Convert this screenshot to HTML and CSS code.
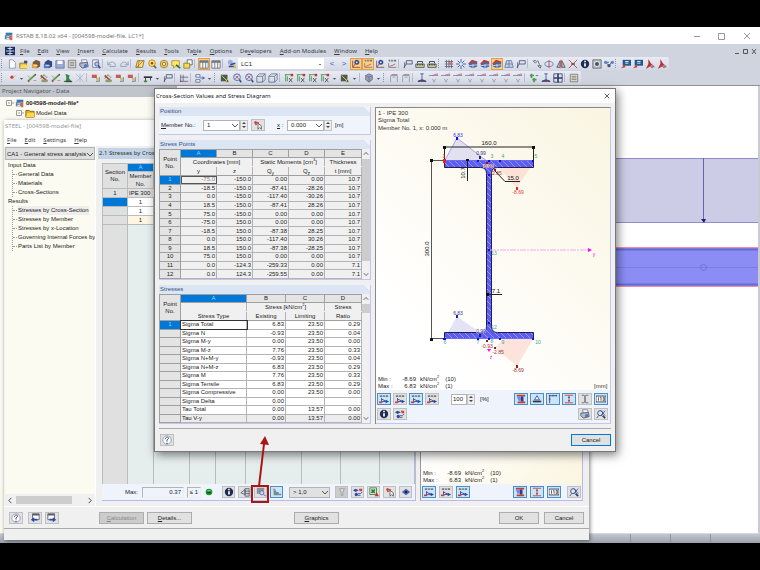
FILE: index.html
```html
<!DOCTYPE html>
<html lang="en">
<head>
    <meta charset="UTF-8">
    <meta name="viewport" content="width=device-width, initial-scale=1.0">
    <title>RSTAB 8.18.02 x64 - [004598-model-file, LC1*]</title>
    <link rel="stylesheet" href="styles.css">
</head>
<body>
    <!-- icon sprite -->
    <svg class="sprite" aria-hidden="true">
        <symbol id="i-app" viewBox="0 0 12 12"><path d="M2 2h8v3H2z" fill="#3b78b5"/><path d="M1 5h6v5H1z" fill="#5a7fa8"/><path d="M7 5h3v6H7z" fill="#d06a4a"/><path d="M3 7h3M3 9h3" stroke="#fff"/></symbol>
        <symbol id="i-doc" viewBox="0 0 12 12"><path d="M0 1h12v10H0z" fill="#1c2f66"/><path d="M1 6h10M3 3h6M3 9h6M6 1v10" stroke="#e8edf8"/></symbol>
        <symbol id="i-new" viewBox="0 0 12 12"><path d="M3 1h4l3 3v7H3z" fill="#fff" stroke="#8791a8"/></symbol>
        <symbol id="i-open" viewBox="0 0 12 12"><path d="M1 5h8v6H1z" fill="#f3c232" stroke="#9c7616"/><path d="M6 2h4v3H6z" fill="#36538c"/><path d="M3 7h9l-2 4H1z" fill="#ffdc69"/></symbol>
        <symbol id="i-folder" viewBox="0 0 12 12"><path d="M1 3h4l1 1h5v7H1z" fill="#e9b21c" stroke="#7a5c10"/><path d="M3 6h8v5H1z" fill="#ffd84e"/></symbol>
        <symbol id="i-block" viewBox="0 0 12 12"><path d="M2 4l4-3 5 2v6l-4 2-5-2z" fill="#7a5a3c"/><path d="M1 6h6v5H1z" fill="#e8993a"/><path d="M3 8h5" stroke="#fff"/></symbol>
        <symbol id="i-blue" viewBox="0 0 12 12"><path d="M2 4l4-3 5 2v6l-4 2-5-2z" fill="#334a84"/><path d="M1 6h6v5H1z" fill="#4d78c4"/><path d="M3 8h5" stroke="#fff"/></symbol>
        <symbol id="i-save" viewBox="0 0 12 12"><path d="M1 2h10v9H1z" fill="#9ba9d6" stroke="#6b77a6"/><path d="M3 2h6v4H3z" fill="#fff"/></symbol>
        <symbol id="i-list" viewBox="0 0 12 12"><path d="M1.500 1.500h9v9h-9z" fill="#e7e4da" stroke="#77736a"/><path d="M3 4h6M3 6h6M3 8h6" stroke="#77736a"/></symbol>
        <symbol id="i-print" viewBox="0 0 12 12"><path d="M3 1h6l1 4H4z" fill="#fff" stroke="#777f96"/><path d="M1 5l9-1 1 5-7 2-3-3z" fill="#b3bad0" stroke="#4d5673"/><circle cx="8" cy="8" r="2" fill="#5575b8"/></symbol>
        <symbol id="i-preview" viewBox="0 0 12 12"><path d="M2 1h7v9H2z" fill="#eef1f8" stroke="#6f7a98"/><circle cx="7" cy="6" r="2.500" fill="#b4c4e6" stroke="#3d548e"/><path d="M9 8l2 3" stroke="#3d548e" stroke-width="2"/></symbol>
        <symbol id="i-undo" viewBox="0 0 12 12"><path d="M1 3v4h4M1 7c3-5 9-4 9 1v1H3" fill="none" stroke="#8a97b5"/></symbol>
        <symbol id="i-redo" viewBox="0 0 12 12"><path d="M11 3v4H7M11 7C8 2 2 3 2 8v1h7" fill="none" stroke="#8a97b5"/></symbol>
        <symbol id="i-plane" viewBox="0 0 12 12"><path d="M3 2h8l-2 8H1z" fill="#f8ea77" stroke="#7b6b2c"/><path d="M2 10L10 2M5 2L4 10" stroke="#c65f20"/></symbol>
        <symbol id="i-lens" viewBox="0 0 12 12"><circle cx="6" cy="5" r="4" fill="#f7e458" stroke="#aa8a25"/><circle cx="6" cy="5" r="1.500" fill="#c22b2b"/><path d="M8 8l3 3" stroke="#666" stroke-width="2"/></symbol>
        <symbol id="i-target" viewBox="0 0 12 12"><circle cx="6" cy="6" r="4.500" fill="#f2e04c" stroke="#8a7728"/><circle cx="6" cy="6" r="2" fill="#fff" stroke="#bb3c2e"/></symbol>
        <symbol id="i-note" viewBox="0 0 12 12"><path d="M1 2h9v6H6l-3 3V8H1z" fill="#fbe768" stroke="#ab9326"/><path d="M6 7l5 4" stroke="#376a36" stroke-width="2"/></symbol>
        <symbol id="i-copy" viewBox="0 0 12 12"><path d="M5 1h6v6H5z" fill="#fff" stroke="#556"/><path d="M1 5h7v6H1z" fill="#f6d954" stroke="#8a7728"/></symbol>
        <symbol id="i-table" viewBox="0 0 12 12"><path d="M1 2h10v9H1z" fill="#f6f6f6" stroke="#6c6f7a"/><path d="M1 3.500h10" stroke="#6c6f7a" stroke-width="2"/><path d="M4.500 4v7M8 4v7" stroke="#6c6f7a"/></symbol>
        <symbol id="i-case" viewBox="0 0 12 12"><circle cx="4" cy="4" r="3" fill="#9ab0dd"/><path d="M2 9h8M4 7l6-2" stroke="#3b4d80" stroke-width="2"/><path d="M8 8h3v3H8z" fill="#e4b93c"/></symbol>
        <symbol id="i-eye" viewBox="0 0 12 12"><circle cx="7" cy="4" r="3" fill="#3b5396"/><circle cx="7" cy="4" r="1" fill="#fff"/><path d="M2 2v8h9M2 10l3-4" fill="none" stroke="#8a4444"/></symbol>
        <symbol id="i-xxx" viewBox="0 0 12 12"><path d="M2 2h2M5 2h2M8 2h3" stroke="#777" stroke-width="2"/><path d="M2 5v5h9M3 9l7-3" stroke="#9b6b6b" fill="none"/></symbol>
        <symbol id="i-ruler" viewBox="0 0 12 12"><path d="M1 6h10v4H1z" fill="#dfe3b1" stroke="#444"/><path d="M3 6v2M5 6v2M7 6v2M9 6v2M3 5V3h6v2" stroke="#333" fill="none"/></symbol>
        <symbol id="i-grid" viewBox="0 0 12 12"><path d="M1 3h10M1 6h10M1 9h10M3 1v10M6 1v10M9 1v10" stroke="#5c6888"/><path d="M5 4h5v3H5z" fill="#c97362"/></symbol>
        <symbol id="i-star" viewBox="0 0 12 12"><path d="M6 0v12M0 6h12M2 2l8 8M10 2l-8 8" stroke="#33539a"/><circle cx="6" cy="6" r="2" fill="#d6e0fa"/></symbol>
        <symbol id="i-house" viewBox="0 0 12 12"><path d="M1 6l4-4 6 2v5l-5 2-5-2z" fill="#4d66a8"/><path d="M1 6l4-4 6 2" fill="none" stroke="#c03a30" stroke-width="2"/><path d="M6 6v5M1 8l10-1" stroke="#d8e0f5"/></symbol>
        <symbol id="i-mesh" viewBox="0 0 12 12"><path d="M3 2h6l2 8H1zM2 6h8M6 2v8" fill="#c7d5ec" stroke="#66769c"/></symbol>
        <symbol id="i-flag" viewBox="0 0 12 12"><path d="M4 2h7v4H4zM1 10l3-4M2 4v7" fill="#dfe5f3" stroke="#47516f"/></symbol>
        <symbol id="i-move" viewBox="0 0 12 12"><path d="M1 2l3 3 3-3 2 5M2 2h3M7 8l3 3 1-3z" stroke="#555b6c" fill="none"/></symbol>
        <symbol id="i-rotate" viewBox="0 0 12 12"><ellipse cx="6" cy="6" rx="5" ry="3" fill="none" stroke="#5b79ba"/><path d="M6 1v10" stroke="#d03b35"/></symbol>
        <symbol id="i-mirror" viewBox="0 0 12 12"><path d="M5 2v8H1zM7 2v8h4z" fill="#b4bccb" stroke="#555"/><path d="M6 1v10" stroke="#d03b35"/></symbol>
        <symbol id="i-cross" viewBox="0 0 12 12"><path d="M1 1l10 10M11 1L1 11" stroke="#c8373e"/><path d="M4 5h4v2H4z" fill="#555"/></symbol>
        <symbol id="i-info" viewBox="0 0 12 12"><circle cx="6" cy="6" r="5" fill="#1d2d52"/><path d="M6 5v4M6 2v2" stroke="#fff" stroke-width="2"/></symbol>
        <symbol id="i-cam" viewBox="0 0 12 12"><path d="M1 1h10v10H1z" fill="#c2c0b2" stroke="#666"/><circle cx="6" cy="6" r="3" fill="#31518f" stroke="#fff"/></symbol>
        <symbol id="i-net" viewBox="0 0 12 12"><path d="M2 4l4 4 4-5M2 4h4" stroke="#405587" fill="none"/><circle cx="2" cy="4" r="2" fill="#6680be"/><circle cx="6" cy="8" r="2" fill="#405587"/><circle cx="10" cy="4" r="2" fill="#6680be"/></symbol>
        <symbol id="i-screen" viewBox="0 0 12 12"><path d="M2 1h10v7H2z" fill="#21588f"/><path d="M5 3h4M5 5h4" stroke="#fff"/><path d="M0 11l5-5v4z" fill="#d6352c"/></symbol>
        <symbol id="i-pdf" viewBox="0 0 12 12"><path d="M4 0l3 5 5 5-6-1-5 3 3-6z" fill="#c82d2d"/><path d="M7 7h3v4H7z" fill="#8c8f99"/></symbol>
        <symbol id="i-node" viewBox="0 0 12 12"><circle cx="6" cy="5" r="2" fill="#d23b32"/><path d="M7 6l3-3" stroke="#e8a33a"/></symbol>
        <symbol id="i-down" viewBox="0 0 6 12"><path d="M1 6h4l-2 2z" fill="#4a5064"/></symbol>
        <symbol id="i-line" viewBox="0 0 12 12"><path d="M1 10L10 2" stroke="#4f9b4a" stroke-width="2"/><path d="M1 3l4 4M8 9h3" stroke="#c9893e"/><circle cx="2" cy="10" r="1" fill="#c33"/><circle cx="10" cy="2" r="1" fill="#c33"/></symbol>
        <symbol id="i-member" viewBox="0 0 12 12"><path d="M2 3l8 7" stroke="#c83d34" stroke-width="2"/><path d="M2 7l4-5 4 4" stroke="#3c8c45" fill="none"/><path d="M3 8h7v3H3z" fill="#8e9a69"/></symbol>
        <symbol id="i-green" viewBox="0 0 12 12"><path d="M3 1l5 2-1 3 4 5H3l1-5z" fill="#38884b"/><path d="M1 10h10" stroke="#333"/></symbol>
        <symbol id="i-faint" viewBox="0 0 12 12"><path d="M1 1l10 10M11 1L1 11M6 1v10" stroke="#b0b6c4"/></symbol>
        <symbol id="i-load" viewBox="0 0 12 12"><path d="M1 2h6v4H1z" fill="#d5584e"/><path d="M4 4l6 5M10 5v5H6" stroke="#4d7da5" fill="none"/><circle cx="8" cy="8" r="2" fill="#e3be45"/></symbol>
        <symbol id="i-beam" viewBox="0 0 12 12"><path d="M1 4h10v2H1z" fill="#333"/><path d="M3 6v5M9 6v3" stroke="#333"/><path d="M1 10h4" stroke="#46894b" stroke-width="2"/></symbol>
        <symbol id="i-support" viewBox="0 0 12 12"><path d="M2 2v8h9M2 5h9M5 2v8" stroke="#63687a" fill="none"/><circle cx="2" cy="10" r="1" fill="#c33"/></symbol>
        <symbol id="i-plus" viewBox="0 0 12 12"><path d="M1 3h5M3 1v5M6 6v5M4 8h5" stroke="#4d9a52" stroke-width="2"/><path d="M8 3h3" stroke="#666"/></symbol>
        <symbol id="i-arrow" viewBox="0 0 12 12"><path d="M1 2h5v3H1zM1 8h5v3H1zM6 6h5" stroke="#53699c" fill="#fff"/><path d="M9 4l3 2-3 2z" fill="#53699c"/></symbol>
        <symbol id="i-zoom" viewBox="0 0 12 12"><circle cx="6" cy="5" r="4" fill="#dce7fb" stroke="#3c5797"/><path d="M4 3l4 4M8 3L4 7" stroke="#b93a3a"/><path d="M9 8l2 3" stroke="#3c5797" stroke-width="2"/></symbol>
        <symbol id="i-cube" viewBox="0 0 12 12"><path d="M1 4h7v7H1zM1 4l3-3h7v7l-3 3M8 4l3-3" fill="none" stroke="#66718f"/></symbol>
        <symbol id="i-axis" viewBox="0 0 12 12"><path d="M1 2h10M2 2v8M4 4v6" stroke="#3b9140"/><path d="M6 6l4 5M10 6l-4 5" stroke="#444"/><path d="M8 1h3v3H8z" fill="#c33"/></symbol>
        <symbol id="i-dark" viewBox="0 0 12 12"><path d="M1 2h8v8H1z" fill="#4f5c49"/><path d="M2 3l6 6M9 7l2 4H7z" stroke="#e4df8c" fill="#334"/></symbol>
        <symbol id="i-solid" viewBox="0 0 12 12"><path d="M2 3l4-2 4 2v5l-4 3-4-3z" fill="#98a1b5" stroke="#69728a"/><path d="M2 3l4 2 4-2M6 5v6" stroke="#69728a" fill="none"/></symbol>
        <symbol id="i-frame" viewBox="0 0 12 12"><path d="M2 11V3h8v8M4 5h4" stroke="#8f98a9" fill="none"/><path d="M3 2h7" stroke="#a96060"/></symbol>
        <symbol id="i-res" viewBox="0 0 12 12"><path d="M0 3h11" stroke="#7b84b8"/><path d="M4 3l6-2v2" fill="none" stroke="#c26a6a"/><path d="M4 7l2 4 2-4" stroke="#969cae" fill="none"/></symbol>
        <symbol id="i-base" viewBox="0 0 12 12"><path d="M4 1h4M6 1v7" stroke="#3d4f9a"/><path d="M1 10l5-2 5 2z" fill="#c23a3a" stroke="#28346e"/></symbol>
        <symbol id="i-four" viewBox="0 0 12 12"><path d="M1 1h10v10H1z" fill="#dfe4fa" stroke="#343c66"/><path d="M6 1v10M1 6h10" stroke="#343c66" stroke-width="2"/></symbol>
        <symbol id="i-help" viewBox="0 0 12 12"><circle cx="6" cy="6" r="5" fill="#fff" stroke="#8992a8"/><path d="M4 5c0-3 4-3 4-1L6 6v2M5 10h2" stroke="#273b78" fill="none"/></symbol>
        <symbol id="i-prev" viewBox="0 0 12 12"><path d="M3 1h8v7H3z" fill="#fff" stroke="#555c70"/><path d="M3 2h8" stroke="#555c70" stroke-width="2"/><path d="M1 8l4-3v2h4v2H5v2z" fill="#274aa5"/></symbol>
        <symbol id="i-next" viewBox="0 0 12 12"><path d="M1 1h8v7H1z" fill="#fff" stroke="#555c70"/><path d="M1 2h8" stroke="#555c70" stroke-width="2"/><path d="M11 8L7 5v2H3v2h4v2z" fill="#274aa5"/></symbol>
        <symbol id="i-sig" viewBox="0 0 12 12"><path d="M1 2.500h3M5 2.500h2M8 2.500h3" stroke="#777" stroke-width="2"/><path d="M3 5v4h6M3 6l6 3" stroke="#28439b" fill="none"/><path d="M0 9h4v2H0z" fill="#d23838"/><path d="M8 7l4 2-4 2z" fill="#28439b"/></symbol>
        <symbol id="i-sect" viewBox="0 0 12 12"><path d="M1 1h10v2H1zM2 9h9v2H2z" fill="#c63a37"/><path d="M6 3h3v6H6z" fill="#333e73"/><path d="M1 3h5v5H3z" fill="#6d8be0"/></symbol>
        <symbol id="i-ibeam" viewBox="0 0 12 12"><path d="M1 1.500h10M1 10.500h10M6 2v8" stroke="#c63a37"/><path d="M5 4h2M5 8h2" stroke="#333"/></symbol>
        <symbol id="i-iplain" viewBox="0 0 12 12"><path d="M2 1.500h3l1 2v5l-1 2H2M10 1.500H7l-1 2v5l1 2h3" stroke="#5b6078" fill="none"/></symbol>
        <symbol id="i-dim" viewBox="0 0 12 12"><path d="M1 2h10M2 1v10M1 6h2M6 1v2M10 1v2" stroke="#2e3d70"/></symbol>
        <symbol id="i-tri" viewBox="0 0 12 12"><path d="M6 2l3 5H3z" fill="#fff" stroke="#2f47a5"/><path d="M1 9h10" stroke="#333" stroke-width="2"/></symbol>
        <symbol id="i-num" viewBox="0 0 12 12"><path d="M0 2.500h12v7H0z" fill="#fff" stroke="#333"/><path d="M3 4v4M5 4h1v4M8 4h2v4H8M8 6h2" stroke="#444" fill="none"/></symbol>
        <symbol id="i-find" viewBox="0 0 12 12"><circle cx="5" cy="5" r="3" fill="#dce6f6" stroke="#303e63"/><path d="M3 8l-2 3M6 2l5 6M11 2L6 8" stroke="#314c9d"/><path d="M8 8l3 3" stroke="#303e63" stroke-width="2"/></symbol>
        <symbol id="i-result" viewBox="0 0 12 12"><path d="M0 4l3-2 4 2-4 2z" fill="#304c9d"/><circle cx="4" cy="9" r="2" fill="#304c9d"/><path d="M7 2h4v3H8z" fill="#c94545"/><path d="M6 8h3l2-2M6 10h3" stroke="#304c9d" fill="none"/></symbol>
        <symbol id="i-pick" viewBox="0 0 12 12"><path d="M2 2l5 2M2 2l2 4" stroke="#d14040" stroke-width="2"/><path d="M6 4v7l2-2 2 2V7z" fill="#fff" stroke="#555"/></symbol>
        <symbol id="i-hatch" viewBox="0 0 12 12"><path d="M6 2h5v9H6zM1 7l5-4v6zM6 5h5M6 8h5" fill="#d3d7e0" stroke="#555d70"/></symbol>
        <symbol id="i-sview" viewBox="0 0 12 12"><path d="M1 1h9v3L5 8H1z" fill="#8d909d"/><circle cx="7" cy="7" r="2.500" fill="#cbd8f5" stroke="#51669f"/><path d="M9 9l3 2" stroke="#51669f"/></symbol>
        <symbol id="i-bars" viewBox="0 0 12 12"><path d="M1 2h3v2H1z" fill="#d58a62"/><path d="M2 4h3v2h3v2h3v2H2z" fill="#6c8f96"/></symbol>
        <symbol id="i-filter" viewBox="0 0 12 12"><path d="M3 2h6L7 6v4H5V6z" fill="#ddd" stroke="#999"/></symbol>
        <symbol id="i-xls" viewBox="0 0 12 12"><path d="M1 1h8v8H1z" fill="#d7ecd4" stroke="#3c7a43"/><path d="M3 3l4 4M7 3L3 7" stroke="#2b7a36" stroke-width="2"/><path d="M7 11l2-5 3 5z" fill="#c9332e"/></symbol>
        <symbol id="i-view" viewBox="0 0 12 12"><path d="M1 6l5-4 5 4-5 4z" fill="#4a66b5"/><circle cx="6" cy="6" r="1.500" fill="#15204a"/></symbol>
        <symbol id="i-chev" viewBox="0 0 8 8"><path d="M1 3l3 3 3-3" fill="none" stroke="#555"/></symbol>
    </svg>

    <div class="app">
        <header class="titlebar">
            <svg class="icon"><use href="#i-app"/></svg>
            <h1>RSTAB 8.18.02 x64 - [004598-model-file, LC1*]</h1>
            <svg class="winctl" viewBox="0 0 60 12"><path d="M3 6.500h6M27.500 3.500h6v6h-6zM53 3l6 6M59 3l-6 6" fill="none" stroke="#999"/></svg>
        </header>

        <div class="ribbon">
            <nav class="menubar">
                <svg class="icon"><use href="#i-doc"/></svg>
                <a href="#"><u>F</u>ile</a>
                <a href="#"><u>E</u>dit</a>
                <a href="#"><u>V</u>iew</a>
                <a href="#"><u>I</u>nsert</a>
                <a href="#"><u>C</u>alculate</a>
                <a href="#"><u>R</u>esults</a>
                <a href="#"><u>T</u>ools</a>
                <a href="#">Ta<u>b</u>le</a>
                <a href="#"><u>O</u>ptions</a>
                <a href="#">De<u>v</u>elopers</a>
                <a href="#"><u>A</u>dd-on Modules</a>
                <a href="#"><u>W</u>indow</a>
                <a href="#"><u>H</u>elp</a>
                <svg class="docctl" viewBox="0 0 24 8"><path d="M1 6.500h4M9.500 2.500h4v4h-4zM18 2l4 5M22 2l-4 5" fill="none" stroke="#555"/></svg>
            </nav>
            <div class="toolbar">
                <i class="grip"></i>
                <button><svg><use href="#i-new"/></svg></button><button><svg><use href="#i-open"/></svg></button><button><svg><use href="#i-block"/></svg></button><button><svg><use href="#i-blue"/></svg></button><button><svg><use href="#i-save"/></svg></button><button><svg><use href="#i-list"/></svg></button><button><svg><use href="#i-print"/></svg></button><button><svg><use href="#i-preview"/></svg></button>
                <i class="sep"></i>
                <button><svg><use href="#i-undo"/></svg></button><button><svg><use href="#i-redo"/></svg></button>
                <i class="sep"></i>
                <button><svg><use href="#i-plane"/></svg></button><button><svg><use href="#i-lens"/></svg></button><button><svg><use href="#i-target"/></svg></button><button><svg><use href="#i-note"/></svg></button><button><svg><use href="#i-copy"/></svg></button>
                <i class="sep"></i>
                <button class="on"><svg><use href="#i-table"/></svg></button><button><svg><use href="#i-table"/></svg></button>
                <i class="sep"></i>
                <button><svg><use href="#i-case"/></svg></button>
                <span class="combo case-combo"><select aria-label="Load case"><option>LC1</option></select><svg class="chev"><use href="#i-down"/></svg></span>
                <button class="step">&lt;</button><button class="step">&gt;</button>
                <button class="on"><svg><use href="#i-eye"/></svg></button><button class="on"><svg><use href="#i-xxx"/></svg></button><button><svg><use href="#i-eye"/></svg></button><button><svg><use href="#i-xxx"/></svg></button>
                <i class="sep"></i>
                <button><svg><use href="#i-flag"/></svg></button><button><svg><use href="#i-ruler"/></svg></button><button><svg><use href="#i-ruler"/></svg></button>
                <i class="grip"></i>
                <button><svg><use href="#i-grid"/></svg></button><button><svg><use href="#i-star"/></svg></button><button><svg><use href="#i-house"/></svg></button><button><svg><use href="#i-house"/></svg></button><button class="on"><svg><use href="#i-house"/></svg></button><button><svg><use href="#i-mesh"/></svg></button><button><svg><use href="#i-flag"/></svg></button>
                <i class="sep"></i>
                <button><svg><use href="#i-move"/></svg></button><button><svg><use href="#i-rotate"/></svg></button><button><svg><use href="#i-mirror"/></svg></button><button><svg><use href="#i-cross"/></svg></button><button><svg><use href="#i-info"/></svg></button><button><svg><use href="#i-cam"/></svg></button><button><svg><use href="#i-net"/></svg></button>
                <i class="grip"></i>
                <button><svg><use href="#i-screen"/></svg></button><button><svg><use href="#i-screen"/></svg></button><button><svg><use href="#i-pdf"/></svg></button><button><svg><use href="#i-pdf"/></svg></button>
            </div>
            <div class="toolbar">
                <i class="grip"></i>
                <button><svg><use href="#i-node"/></svg></button><button class="drop"><svg><use href="#i-down"/></svg></button>
                <button><svg><use href="#i-line"/></svg></button><button><svg><use href="#i-member"/></svg></button><button><svg><use href="#i-line"/></svg></button><button><svg><use href="#i-green"/></svg></button><button><svg><use href="#i-faint"/></svg></button>
                <i class="sep"></i>
                <button><svg><use href="#i-load"/></svg></button><button><svg><use href="#i-member"/></svg></button><button><svg><use href="#i-load"/></svg></button><button><svg><use href="#i-load"/></svg></button>
                <i class="sep"></i>
                <button><svg><use href="#i-beam"/></svg></button><button class="drop"><svg><use href="#i-down"/></svg></button><button><svg><use href="#i-flag"/></svg></button>
                <i class="sep"></i>
                <button><svg><use href="#i-support"/></svg></button>
                <i class="sep"></i>
                <button><svg><use href="#i-arrow"/></svg></button><button class="drop"><svg><use href="#i-down"/></svg></button>
                <i class="grip"></i>
                <button><svg><use href="#i-dark"/></svg></button><button><svg><use href="#i-zoom"/></svg></button><button><svg><use href="#i-zoom"/></svg></button><button><svg><use href="#i-cube"/></svg></button><button><svg><use href="#i-cube"/></svg></button>
                <i class="sep"></i>
                <button><svg><use href="#i-axis"/></svg></button><button><svg><use href="#i-axis"/></svg></button><button><svg><use href="#i-axis"/></svg></button><button><svg><use href="#i-axis"/></svg></button><button class="drop"><svg><use href="#i-down"/></svg></button><button><svg><use href="#i-dark"/></svg></button><button class="drop"><svg><use href="#i-down"/></svg></button>
                <i class="sep"></i>
                <button><svg><use href="#i-solid"/></svg></button><button class="drop"><svg><use href="#i-down"/></svg></button>
                <i class="grip"></i>
                <button><svg><use href="#i-frame"/></svg></button><button><svg><use href="#i-frame"/></svg></button>
                <i class="sep"></i>
                <button><svg><use href="#i-base"/></svg></button><button><svg><use href="#i-res"/></svg></button><button><svg><use href="#i-res"/></svg></button><button><svg><use href="#i-res"/></svg></button><button><svg><use href="#i-res"/></svg></button><button><svg><use href="#i-res"/></svg></button><button><svg><use href="#i-res"/></svg></button><button><svg><use href="#i-res"/></svg></button><button><svg><use href="#i-res"/></svg></button>
                <i class="sep"></i>
                <button><svg><use href="#i-plus"/></svg></button><button><svg><use href="#i-base"/></svg></button><button><svg><use href="#i-four"/></svg></button>
                <i class="sep"></i>
                <button><svg><use href="#i-list"/></svg></button>
            </div>
        </div>

        <div class="workspace">
            <aside class="navigator">
                <h2>Project Navigator - Data</h2>
                <div class="project">
                    <p><svg class="twig" viewBox="0 0 8 10"><path d="M.500 2.500h5v5h-5zM2 5h2M6 5h2" fill="none" stroke="#999"/></svg><svg class="icon"><use href="#i-app"/></svg><b>004598-model-file*</b></p>
                    <p class="sub"><svg class="twig" viewBox="0 0 8 10"><path d="M.500 2.500h5v5h-5zM2 5h2M6 5h2" fill="none" stroke="#999"/></svg><svg class="icon"><use href="#i-folder"/></svg>Model Data</p>
                </div>
            </aside>
            <main class="canvas">
                <svg width="100%" height="100%">
                    <rect x="100" y="72" width="100%" height="65" fill="#cccce6"/>
                    <path d="M100 72.500h2000M100 136.500h2000" stroke="#8e8ecb"/>
                    <path d="M526.500 72v61" stroke="#6464b4"/>
                    <path d="M524 133h5l-2 4z" fill="#1c1c82"/>
                    <rect x="100" y="162" width="100%" height="39" fill="#8c8cf5"/>
                    <path d="M100 163.500h2000M100 198.500h2000" stroke="#6969d2" stroke-width="2"/>
                    <path d="M100 181.500h2000" stroke="#7c7ce6"/>
                    <path d="M100 161.500h2000M100 200.500h2000" stroke="#f08ca0"/>
                    <circle cx="526.500" cy="181.500" r="3" fill="none" stroke="#7272dc"/>
                </svg>
            </main>
        </div>
        <footer class="statusbar"><i></i><i></i><i></i></footer>

        <!-- STEEL add-on module window -->
        <section class="window steel">
            <h2 class="caption">STEEL - [004598-model-file]</h2>
            <nav class="menubar">
                <a href="#"><u>F</u>ile</a>
                <a href="#"><u>E</u>dit</a>
                <a href="#"><u>S</u>ettings</a>
                <a href="#"><u>H</u>elp</a>
            </nav>
            <div class="steel-body">
                <div class="side">
                    <span class="combo side-combo"><select aria-label="Case"><option>CA1 - General stress analysis</option></select><svg class="chev"><use href="#i-chev"/></svg></span>
                    <div class="tree">
                        <p>Input Data</p>
                        <ul>
                            <li>General Data</li>
                            <li>Materials</li>
                            <li>Cross-Sections</li>
                        </ul>
                        <p>Results</p>
                        <ul>
                            <li><span class="current">Stresses by Cross-Section</span></li>
                            <li>Stresses by Member</li>
                            <li>Stresses by x-Location</li>
                            <li>Governing Internal Forces by</li>
                            <li>Parts List by Member</li>
                        </ul>
                    </div>
                    <div class="hscroll"><svg viewBox="0 0 8 8"><path d="M5 1L2 4l3 3" fill="none" stroke="#333"/></svg><i></i><svg viewBox="0 0 8 8"><path d="M3 1l3 3-3 3" fill="none" stroke="#333"/></svg></div>
                </div>
                <div class="results">
                    <h3>2.1 Stresses by Cross-Section</h3>
                    <div class="result-panes">
                        <div class="result-list">
                            <table class="result-table">
                                <colgroup><col class="c25"><col class="c26"><col class="c36"><col class="c26"><col class="c30"><col class="c56"><col class="c39"><col class="c39"><col></colgroup>
                                <thead>
                                    <tr class="letters"><th rowspan="2">Section<br>No.</th><th class="sel">A</th><th></th><th></th><th></th><th></th><th></th><th></th><th></th></tr>
                                    <tr class="names"><th>Member<br>No.</th><th></th><th></th><th></th><th></th><th></th><th></th><th></th></tr>
                                </thead>
                                <tbody>
                                    <tr class="section"><th>1</th><td colspan="8">IPE 300</td></tr>
                                    <tr><th class="sel"></th><td class="cell">1</td><td></td><td></td><td></td><td></td><td></td><td></td><td></td></tr>
                                    <tr><th></th><td class="cell">1</td><td></td><td></td><td></td><td></td><td></td><td></td><td></td></tr>
                                    <tr><th></th><td class="cell cream">1</td><td></td><td></td><td></td><td></td><td></td><td></td><td></td></tr>
                                    <tr class="rest"><th></th><td></td><td></td><td></td><td></td><td></td><td></td><td></td><td></td></tr>
                                </tbody>
                            </table>
                            <div class="listbar">
                                <label for="max">Max:</label>
                                <input id="max" class="max" value="0.37">
                                <input class="limit" aria-label="Limit" value="≤ 1">
                                <svg class="smile" viewBox="0 0 12 12"><circle cx="6" cy="6" r="5" fill="#1f9a35"/><path d="M3 7h6" stroke="#0c4a16" stroke-width="2"/><path d="M4 4h4" stroke="#bff0c0"/></svg>
                                <button class="ib"><svg><use href="#i-info"/></svg></button>
                                <button class="ib"><svg><use href="#i-hatch"/></svg></button>
                                <button class="ib"><svg><use href="#i-sview"/></svg></button>
                                <button class="ib act"><svg><use href="#i-bars"/></svg></button>
                                <span class="combo limit-combo"><select aria-label="Ratio filter"><option>&gt; 1,0</option></select><svg class="chev"><use href="#i-chev"/></svg></span>
                                <button class="ib" disabled><svg><use href="#i-filter"/></svg></button>
                                <button class="ib"><svg><use href="#i-result"/></svg></button>
                                <button class="ib"><svg><use href="#i-xls"/></svg></button>
                                <button class="ib"><svg><use href="#i-pick"/></svg></button>
                                <button class="ib"><svg><use href="#i-view"/></svg></button>
                            </div>
                        </div>
                        <div class="preview">
                            <div class="preview-area">
                                <dl class="minmax"><dt>Min :</dt><dd>-8.69</dd><dd>kN/cm<sup>2</sup></dd><dd>(10)</dd><dt>Max :</dt><dd>6.83</dd><dd>kN/cm<sup>2</sup></dd><dd>(1)</dd></dl>
                            </div>
                            <div class="previewbar">
                                <button class="ib act"><svg><use href="#i-sig"/></svg></button>
                                <button class="ib"><svg><use href="#i-sig"/></svg></button>
                                <button class="ib act push"><svg><use href="#i-sig"/></svg></button>
                                <button class="ib act"><svg><use href="#i-sect"/></svg></button>
                                <button class="ib act"><svg><use href="#i-ibeam"/></svg></button>
                                <button class="ib act"><svg><use href="#i-num"/></svg></button>
                                <button class="ib gap"><svg><use href="#i-find"/></svg></button>
                            </div>
                        </div>
                    </div>
                </div>
            </div>
            <div class="actions">
                <button class="ib help"><svg><use href="#i-help"/></svg></button>
                <button class="ib"><svg><use href="#i-prev"/></svg></button>
                <button class="ib"><svg><use href="#i-next"/></svg></button>
                <button class="btn calc" disabled><u>C</u>alculation</button>
                <button class="btn"><u>D</u>etails...</button>
                <button class="btn graphics"><u>G</u>raphics</button>
                <button class="btn ok">OK</button>
                <button class="btn cancel">Cancel</button>
            </div>
        </section>

        <!-- cross-section dialog -->
        <section class="window dialog" role="dialog" aria-labelledby="dlg-title">
            <header class="dialog-title">
                <h2 id="dlg-title">Cross-Section Values and Stress Diagram</h2>
                <button class="close" aria-label="Close"><svg viewBox="0 0 8 8"><path d="M1 1l6 6M7 1L1 7" stroke="#333"/></svg></button>
            </header>
            <div class="dialog-body">
                <div class="groups">
                    <section class="group">
                        <h3>Position</h3>
                        <div class="position">
                            <label for="member"><u>M</u>ember No.:</label>
                            <span class="combo pos-combo"><select id="member"><option>1</option></select><svg class="chev"><use href="#i-chev"/></svg></span>
                            <span class="spin"></span>
                            <button class="ib"><svg><use href="#i-pick"/></svg></button>
                            <label for="loc" class="loc"><u>x</u> :</label>
                            <span class="combo pos-combo"><select id="loc"><option>0.000</option></select><svg class="chev"><use href="#i-chev"/></svg></span>
                            <span class="spin"></span>
                            <span class="unit">[m]</span>
                        </div>
                    </section>

                    <section class="group">
                        <h3>Stress Points</h3>
                        <div class="scroller">
                            <table class="grid points">
                                <colgroup><col class="c21"><col class="c36"><col class="c36"><col class="c36"><col class="c36"><col></colgroup>
                                <thead>
                                    <tr class="letters"><th rowspan="3">Point<br>No.</th><th class="sel">A</th><th>B</th><th>C</th><th>D</th><th>E</th></tr>
                                    <tr class="names top"><th colspan="2">Coordinates [mm]</th><th colspan="2">Static Moments [cm<sup>3</sup>]</th><th>Thickness</th></tr>
                                    <tr class="names"><th>y</th><th>z</th><th>Q<sub>y</sub></th><th>Q<sub>z</sub></th><th>t [mm]</th></tr>
                                </thead>
                                <tbody>
                                    <tr><th class="sel">1</th><td class="focus">-75.0</td><td>-150.0</td><td>0.00</td><td>0.00</td><td>10.7</td></tr>
                                    <tr><th>2</th><td>-18.5</td><td>-150.0</td><td>-87.41</td><td>-28.26</td><td>10.7</td></tr>
                                    <tr><th>3</th><td>0.0</td><td>-150.0</td><td>-117.40</td><td>-30.26</td><td>10.7</td></tr>
                                    <tr><th>4</th><td>18.5</td><td>-150.0</td><td>-87.41</td><td>28.26</td><td>10.7</td></tr>
                                    <tr><th>5</th><td>75.0</td><td>-150.0</td><td>0.00</td><td>0.00</td><td>10.7</td></tr>
                                    <tr><th>6</th><td>-75.0</td><td>150.0</td><td>0.00</td><td>0.00</td><td>10.7</td></tr>
                                    <tr><th>7</th><td>-18.5</td><td>150.0</td><td>-87.38</td><td>28.25</td><td>10.7</td></tr>
                                    <tr><th>8</th><td>0.0</td><td>150.0</td><td>-117.40</td><td>30.26</td><td>10.7</td></tr>
                                    <tr><th>9</th><td>18.5</td><td>150.0</td><td>-87.38</td><td>-28.25</td><td>10.7</td></tr>
                                    <tr><th>10</th><td>75.0</td><td>150.0</td><td>0.00</td><td>0.00</td><td>10.7</td></tr>
                                    <tr><th>11</th><td>0.0</td><td>-124.3</td><td>-259.33</td><td>0.00</td><td>7.1</td></tr>
                                    <tr><th>12</th><td>0.0</td><td>124.3</td><td>-259.55</td><td>0.00</td><td>7.1</td></tr>
                                </tbody>
                            </table>
                            <div class="vscroll"><svg viewBox="0 0 8 8"><path d="M1 5l3-3 3 3" fill="none" stroke="#333"/></svg><i class="long"></i><svg viewBox="0 0 8 8"><path d="M1 3l3 3 3-3" fill="none" stroke="#333"/></svg></div>
                        </div>
                    </section>

                    <section class="group">
                        <h3>Stresses</h3>
                        <div class="scroller">
                            <table class="grid stresses">
                                <colgroup><col class="c21"><col class="c66"><col class="c39"><col class="c39"><col></colgroup>
                                <thead>
                                    <tr class="letters"><th rowspan="3">Point<br>No.</th><th class="sel">A</th><th>B</th><th>C</th><th>D</th></tr>
                                    <tr class="names top"><th></th><th colspan="2">Stress [kN/cm<sup>2</sup>]</th><th>Stress</th></tr>
                                    <tr class="names"><th>Stress Type</th><th>Existing</th><th>Limiting</th><th>Ratio</th></tr>
                                </thead>
                                <tbody>
                                    <tr><th class="sel">1</th><td class="focus">Sigma Total</td><td>6.83</td><td>23.50</td><td>0.29</td></tr>
                                    <tr><th></th><td>Sigma N</td><td>-0.93</td><td>23.50</td><td>0.04</td></tr>
                                    <tr><th></th><td>Sigma M-y</td><td>0.00</td><td>23.50</td><td>0.00</td></tr>
                                    <tr><th></th><td>Sigma M-z</td><td>7.76</td><td>23.50</td><td>0.33</td></tr>
                                    <tr><th></th><td>Sigma N+M-y</td><td>-0.93</td><td>23.50</td><td>0.04</td></tr>
                                    <tr><th></th><td>Sigma N+M-z</td><td>6.83</td><td>23.50</td><td>0.29</td></tr>
                                    <tr><th></th><td>Sigma M</td><td>7.76</td><td>23.50</td><td>0.33</td></tr>
                                    <tr><th></th><td>Sigma Tensile</td><td>6.83</td><td>23.50</td><td>0.29</td></tr>
                                    <tr><th></th><td>Sigma Compressive</td><td>0.00</td><td>23.50</td><td>0.00</td></tr>
                                    <tr><th></th><td>Sigma Delta</td><td>0.00</td><td></td><td></td></tr>
                                    <tr><th></th><td>Tau Total</td><td>0.00</td><td>13.57</td><td>0.00</td></tr>
                                    <tr class="dim"><th></th><td>Tau V-y</td><td>0.00</td><td>13.57</td><td>0.00</td></tr>
                                </tbody>
                            </table>
                            <div class="vscroll"><svg viewBox="0 0 8 8"><path d="M1 5l3-3 3 3" fill="none" stroke="#333"/></svg><i class="short"></i><svg viewBox="0 0 8 8"><path d="M1 3l3 3 3-3" fill="none" stroke="#333"/></svg></div>
                        </div>
                    </section>
                </div>

                <div class="diagram">
                    <svg class="drawing" viewBox="376 108 234 282">
                        <defs>
                            <pattern id="hatch" width="6" height="6" patternUnits="userSpaceOnUse"><path d="M0 0h6v6H0z" fill="#5c5cf2"/><path d="M-1-1l8 8M5-1l2 2M-1 5l2 2" stroke="#9696f8"/></pattern>
                        </defs>
                        <g class="note">
                            <text x="378" y="115">1 - IPE 300</text>
                            <text x="378" y="122">Sigma Total</text>
                            <text x="378" y="130">Member No. 1, x: 0.000 m</text>
                            <text x="594" y="388">[mm]</text>
                        </g>
                        <!-- stress areas -->
                        <path d="M444.500 161l12.500-23 31 24M448 332l9-15.500 23 16z" fill="#c8c8f0" fill-opacity=".5"/>
                        <path d="M444.500 161l12.500-23 31 24" fill="none" stroke="#a4a4ee"/>
                        <path d="M499 168h31l-13 20zM503 339h30l-16 27-22-18z" fill="#fcd2c8" fill-opacity=".6"/>
                        <!-- profile -->
                        <path d="M444.500 160.500h89v7h-36q-6 0-6 6V326.500q0 6 6 6h36v6h-89v-6h36q6 0 6-6V173.500q0-6-6-6h-36z" fill="url(#hatch)" stroke="#202050"/>
                        <path d="M445 160.500h88M445 338.500h88" stroke="#6c6cf2"/>
                        <!-- dimensions -->
                        <g fill="none" stroke="#222">
                            <path d="M444.500 161v-14h89v14"/>
                            <path d="M444 160.500h-12.500v178H444" stroke="#555"/>
                            <path d="M467.500 161v20M494 170l11 11.500h15M486 294.500h16"/>
                        </g>
                        <path d="M443 146h3v3h-3zM532 146h3v3h-3zM430 159h3v3h-3zM430 338h3v3h-3zM466 159h3v2h-3zM486 293h3v3h-3z" fill="#111"/>
                        <path d="M490 250h99" stroke="#f8a8f0" stroke-dasharray="6 1 2 1"/>
                        <path d="M588 248l4 2-4 2zM487 349h4l-2 3z" fill="#f0f"/>
                        <path d="M456 137h2v3h-2zM477 160h2v2h-2zM488 160h2v2h-2zM499 160h2v2h-2zM532 160h2v2h-2zM488 174h2v2h-2zM488 249h2v2h-2zM488 322h2v2h-2zM443 338h3v2h-3zM477 338h2v2h-2zM488 338h2v2h-2zM499 338h2v2h-2zM532 338h2v2h-2z" fill="#1010e0"/>
                        <path d="M456 315h2v3h-2zM479 156h2v3h-2zM479 334h2v3h-2z" fill="#202080"/>
                        <path d="M443 159h3v4h-3zM516 187h2v3h-2z" fill="#f02020"/>
                        <path d="M486 162h2v2h-2zM494 169h2v2h-2zM486 340h2v2h-2zM494 347h2v2h-2zM516 365h2v3h-2z" fill="#901818"/>
                        <path d="M483 164h11v4h-11zM476 329h10v4h-10z" fill="#fff" fill-opacity=".6"/>
                        <g class="dims">
                            <text x="489" y="145">160.0</text>
                            <text x="513" y="180">15.0</text>
                            <text x="496" y="293">7.1</text>
                            <text transform="translate(429 249) rotate(-90)">300.0</text>
                            <text transform="translate(465 173) rotate(-90)">10.7</text>
                        </g>
                        <g class="marks">
                            <text x="458" y="137" fill="#3030f0">6.83</text>
                            <text x="481" y="155" fill="#30309c">0.99</text>
                            <text x="458" y="315" fill="#30309c">6.83</text>
                            <text x="481" y="333" fill="#30309c">0.99</text>
                            <text x="488" y="168" fill="#a03030">-0.93</text>
                            <text x="496" y="175" fill="#a03030">-2.85</text>
                            <text x="518" y="194" fill="#f03030">-8.69</text>
                            <text x="487" y="348" fill="#a03030">-0.93</text>
                            <text x="498" y="354" fill="#a03030">-2.85</text>
                            <text x="518" y="372" fill="#a03030">-8.69</text>
                            <text x="444" y="158" fill="#f03030">1</text>
                            <g fill="#30a890">
                                <text x="492" y="158">3</text><text x="503" y="158">4</text><text x="536" y="158">5</text>
                                <text x="494" y="255">13</text><text x="494" y="329">12</text>
                                <text x="445" y="344">6</text><text x="478" y="344">7</text><text x="492" y="343">8</text><text x="503" y="344">9</text><text x="538" y="344">10</text>
                            </g>
                            <g fill="#f000f0"><text x="594" y="256">y</text><text x="491" y="359">z</text></g>
                        </g>
                    </svg>
                    <dl class="minmax"><dt>Min :</dt><dd>-8.69</dd><dd>kN/cm<sup>2</sup></dd><dd>(10)</dd><dt>Max :</dt><dd>6.83</dd><dd>kN/cm<sup>2</sup></dd><dd>(1)</dd></dl>
                    <div class="diagram-tools">
                        <div class="toolrow">
                            <button class="ib act"><svg><use href="#i-sig"/></svg></button>
                            <button class="ib"><svg><use href="#i-sig"/></svg></button>
                            <button class="ib act"><svg><use href="#i-sig"/></svg></button>
                            <button class="ib"><svg><use href="#i-sig"/></svg></button>
                            <input class="scale" aria-label="Scale" value="100"><span class="spin"></span>
                            <span class="unit push">[%]</span>
                            <button class="ib act"><svg><use href="#i-sect"/></svg></button>
                            <button class="ib act"><svg><use href="#i-tri"/></svg></button>
                            <button class="ib act"><svg><use href="#i-dim"/></svg></button>
                            <button class="ib act"><svg><use href="#i-ibeam"/></svg></button>
                            <button class="ib"><svg><use href="#i-iplain"/></svg></button>
                            <button class="ib act"><svg><use href="#i-num"/></svg></button>
                        </div>
                        <div class="toolrow">
                            <button class="ib"><svg><use href="#i-info"/></svg></button>
                            <button class="ib push"><svg><use href="#i-result"/></svg></button>
                            <button class="ib"><svg><use href="#i-print"/></svg></button>
                            <button class="ib"><svg><use href="#i-find"/></svg></button>
                        </div>
                    </div>
                </div>
            </div>
            <footer class="dialog-foot">
                <button class="ib"><svg><use href="#i-help"/></svg></button>
                <button class="btn default">Cancel</button>
            </footer>
        </section>

        <!-- callout from the toolbar button to the dialog -->
        <svg class="callout" viewBox="0 0 20 70" aria-hidden="true">
            <path d="M2 51h16v16H2z" fill="none" stroke="#a91616" stroke-width="2"/>
            <path d="M9 51l5-42" stroke="#a91616" stroke-width="2"/>
            <path d="M15 1l4 9-9-1z" fill="#a91616"/>
        </svg>
    </div>
</body>
</html>
```
FILE: styles.css
```css
* {
    margin: 0;
    padding: 0;
    box-sizing: border-box;
}

body {
    font-family: 'Liberation Sans', Arial, sans-serif;
    font-size: 6px;
    line-height: 8px;
    color: #222;
    background: #000;
    min-height: 100vh;
    padding: 27px 0;
    display: flex;
}

button, input, select {
    font: inherit;
    color: inherit;
    border: 0;
    background: none;
    border-radius: 0;
    appearance: none;
}

h1, h2, h3, th {
    font-size: 6px;
    font-weight: normal;
}

a {
    color: inherit;
    text-decoration: none;
}

svg {
    display: block;
}

sup, sub {
    font-size: 4px;
    line-height: 1px;
}

sub {
    font-size: 5px;
}

.sprite {
    display: none;
}

.icon {
    width: 10px;
    height: 10px;
    flex: none;
}

.app {
    position: relative;
    flex: 1;
    display: flex;
    flex-direction: column;
    background: #fff;
    min-width: 0;
}

.titlebar {
    height: 17px;
    display: flex;
    align-items: center;
    gap: 2px;
    padding: 0 9px 0 4px;
    color: #777;
}

.titlebar h1,
.caption,
.menubar,
.dialog-title h2,
.navigator h2,
.results h3 {
    font-family: 'Noto Sans', 'Open Sans', sans-serif;
}

.winctl {
    width: 60px;
    height: 12px;
    margin-left: auto;
}

.ribbon {
    background: #cfd4de;
    border-bottom: 1px solid #8e9096;
    height: 42px;
}

.menubar {
    display: flex;
    align-items: center;
    gap: 8px;
    height: 13px;
    color: #383e4a;
}

.ribbon .menubar {
    padding: 0 2px 0 5px;
}

.ribbon .menubar .icon {
    margin-right: -3px;
}

.docctl {
    width: 24px;
    height: 8px;
    margin-left: auto;
}

.toolbar {
    display: flex;
    align-items: center;
    width: max-content;
    height: 13px;
    margin-bottom: 1px;
    padding: 0 1px;
    border-radius: 2px;
    background: linear-gradient(#e9ecf4, #d3d8e5);
}

.toolbar button {
    width: 12px;
    height: 12px;
    padding: 1px;
    flex: none;
}

.toolbar button svg {
    width: 10px;
    height: 10px;
}

.toolbar .on {
    background: #ffcf85;
    border: 1px solid #d9a14c;
    padding: 0;
}

.toolbar .drop {
    width: 8px;
}

.toolbar .drop svg {
    width: 5px;
}

.toolbar .step {
    color: #3b5bb0;
    font-size: 8px;
    padding: 0;
}

.grip {
    width: 5px;
    height: 9px;
    flex: none;
    border-left: 1px dotted #8b92a6;
}

.sep {
    width: 4px;
    height: 9px;
    flex: none;
    border-left: 1px solid #b7bdcc;
}

.combo {
    display: grid;
    align-items: center;
    height: 11px;
    background: #fff;
}

.combo > * {
    grid-area: 1 / 1;
}

.combo select {
    width: 100%;
    height: 100%;
    padding-left: 3px;
    overflow: hidden;
}

.combo .chev {
    width: 8px;
    height: 8px;
    justify-self: end;
    pointer-events: none;
}

.case-combo {
    width: 86px;
    margin-right: 2px;
}

.workspace {
    flex: 1;
    display: flex;
    background: #b5b8be;
}

.navigator {
    width: 175px;
    margin-right: 2px;
    background: #fcfbf3;
}

.navigator h2 {
    height: 11px;
    line-height: 11px;
    padding-left: 2px;
    background: #c0c4cc;
    color: #555;
}

.project {
    padding-top: 1px;
}

.project p {
    display: flex;
    align-items: center;
    gap: 1px;
    height: 10px;
    padding-left: 6px;
}

.project .sub {
    padding-left: 16px;
}

.twig {
    width: 8px;
    height: 10px;
}

.canvas {
    flex: 1;
    background: #fff;
    border-right: 2px solid #c9cbd0;
}

.statusbar {
    height: 10px;
    display: flex;
    justify-content: flex-end;
    padding-right: 10px;
    background: linear-gradient(#c3c7d0, #9da1ab);
    border-top: 1px solid #d8d8d8;
}

.statusbar i {
    width: 40px;
    border-left: 1px solid #8f939c;
}

.window {
    position: absolute;
    background: #f0f0f0;
}

/* STEEL window */
.steel {
    left: 4px;
    right: 171px;
    top: 93px;
    bottom: 3px;
    display: flex;
    flex-direction: column;
    box-shadow: 1px 1px 4px rgba(0, 0, 0, 0.5);
}

.caption {
    height: 13px;
    line-height: 13px;
    padding-left: 1px;
    background: #fff;
    color: #999;
}

.steel > .menubar {
    background: #fff;
    padding-left: 3px;
}

.steel-body {
    flex: 1;
    display: flex;
    gap: 2px;
    border-bottom: 1px solid #fff;
    min-height: 0;
}

.side {
    width: 92px;
    display: flex;
    flex-direction: column;
    padding-left: 1px;
    padding-top: 1px;
    border-right: 1px solid #fff;
}

.side-combo {
    height: 13px;
    background: #dedede;
    border: 1px solid #b4b4b4;
}

.side-combo select {
    padding-left: 1px;
    min-width: 0;
}

.tree {
    flex: 1;
    background: #fcfbf1;
    padding: 1px 0 0 3px;
    line-height: 9px;
    overflow: hidden;
    white-space: nowrap;
}

.tree ul {
    list-style: none;
    margin-left: 4px;
    border-left: 1px dotted #999;
}

.tree li {
    display: flex;
    align-items: center;
    gap: 1px;
}

.tree li::before {
    content: '';
    width: 4px;
    border-top: 1px dotted #999;
    flex: none;
}

.tree .current {
    background: #eeeeee;
}

.hscroll {
    display: flex;
    align-items: center;
    gap: 2px;
    height: 12px;
    padding: 0 2px;
}

.hscroll svg {
    width: 7px;
    height: 7px;
}

.hscroll i {
    width: 56px;
    height: 8px;
    background: #cdcdcd;
    margin-right: auto;
}

.results {
    flex: 1;
    display: flex;
    flex-direction: column;
    min-width: 0;
    padding: 2px 6px 5px 0;
}

.results h3 {
    height: 11px;
    line-height: 11px;
    padding-left: 1px;
    background: #c3d3e6;
    color: #333;
    margin-bottom: 4px;
}

.result-panes {
    flex: 1;
    display: flex;
    gap: 4px;
    padding-left: 4px;
}

.result-list {
    flex: 1;
    display: flex;
    flex-direction: column;
    border-right: 1px solid #b9b9ee;
    border-bottom: 1px solid #b9b9ee;
}

.result-table {
    flex: 1;
    width: 100%;
    table-layout: fixed;
    border-collapse: collapse;
    background: #e6eeed;
    text-align: center;
}

.result-table th,
.result-table td {
    border: 1px solid #b9bcbc;
    height: 8px;
}

.result-table th {
    background: #e0e0e0;
    line-height: 8px;
}

.result-table .letters th {
    line-height: 7px;
}

.result-table .names th {
    height: 17px;
}

.result-table th.sel,
.grid th.sel {
    background: #0078d7;
    color: #9fd0ff;
}

.result-table .section td {
    background: #e0e0e0;
    text-align: left;
    padding-left: 1px;
}

.result-table .cell {
    background: #fff;
}

.result-table .cream {
    background: #fdf6e4;
}

.result-table .rest td,
.result-table .rest th {
    height: auto;
    border-bottom: 0;
}

.listbar,
.previewbar {
    display: flex;
    align-items: center;
    gap: 3px;
    height: 16px;
    background: #eff3fb;
}

.listbar {
    padding: 0 2px 0 23px;
}

.listbar input {
    height: 11px;
    border: 1px solid #b4b4b4;
    border-right-color: #eee;
    border-bottom-color: #eee;
}

.max {
    width: 42px;
    text-align: right;
    padding-right: 2px;
    margin-left: 1px;
}

.limit {
    width: 14px;
    text-align: center;
}

.smile {
    width: 8px;
    height: 8px;
    margin: 0 6px 0 1px;
}

.ib {
    width: 14px;
    height: 12px;
    flex: none;
    display: grid;
    place-items: center;
    background: #e1e1e1;
    border: 1px solid #c0c0c0;
}

.ib svg {
    width: 10px;
    height: 10px;
}

.ib.act {
    background: #cce4f7;
    border-color: #4a8fc8;
}

.ib:disabled {
    background: #ccc;
}

.limit-combo {
    width: 41px;
    background: #e1e1e1;
    border: 1px solid #b4b4b4;
    margin: 0 2px 0 3px;
}

.listbar .ib {
    width: 13px;
}

.preview {
    width: 163px;
    display: flex;
    flex-direction: column;
    border-left: 1px solid #999;
    border-right: 1px solid #b9b9ee;
    border-bottom: 1px solid #b9b9ee;
}

.preview-area {
    flex: 1;
    display: flex;
    align-items: flex-end;
    background: linear-gradient(135deg, #fff 60%, #fbf5df);
}

.minmax {
    display: grid;
    grid-template-columns: 16px 18px auto auto;
    justify-content: start;
    line-height: 7px;
    column-gap: 4px;
    padding: 0 2px;
    white-space: nowrap;
}

.minmax dd:nth-of-type(3n + 1) {
    text-align: right;
}

.minmax dd:nth-of-type(3n) {
    padding-left: 2px;
}

.previewbar {
    padding: 0 1px;
}

.push {
    margin-right: auto;
}

.previewbar .gap {
    margin-left: 3px;
}

.actions {
    height: 22px;
    margin-bottom: 11px;
    padding: 0 5px;
    display: flex;
    align-items: center;
    gap: 3px;
    border-bottom: 1px solid #aaa;
}

.actions .help {
    margin-right: 2px;
}

.btn {
    width: 45px;
    height: 12px;
    background: #e1e1e1;
    border: 1px solid #adadad;
}

.btn:disabled {
    background: #ccc;
    color: #888;
}

.actions .calc {
    margin-left: 37px;
}

.actions .graphics {
    margin-left: 99px;
}

.actions .ok,
.actions .cancel {
    width: 40px;
}

.actions .ok {
    margin-left: auto;
}

.actions .cancel {
    margin-left: 2px;
}

/* dialog */
.dialog {
    left: 154px;
    right: 144px;
    top: 61px;
    border: 1px solid #777;
    box-shadow: 2px 3px 9px rgba(0, 0, 0, 0.5);
}

.dialog-title {
    display: flex;
    align-items: center;
    justify-content: space-between;
    height: 14px;
    padding: 0 4px 0 1px;
    background: #fff;
}

.close {
    width: 8px;
    height: 8px;
}

.close svg {
    width: 6px;
    height: 6px;
    margin: 0 auto;
}

.dialog-body {
    display: grid;
    grid-template-columns: 212px 1fr;
    gap: 4px;
    margin: 0 4px;
    padding: 4px 0;
    border-bottom: 1px solid #aaa;
}

.groups {
    display: flex;
    flex-direction: column;
    gap: 5px;
}

.group {
    border-right: 1px solid #c4c4f0;
    border-bottom: 1px solid #c4c4f0;
    background: #f0f4fb;
}

.group h3 {
    height: 9px;
    line-height: 9px;
    padding-left: 1px;
    color: #34517e;
    background: #dbe5f4;
    clip-path: polygon(0 0, 205px 0, 100% 6px, 100% 100%, 0 100%);
}

.position {
    display: flex;
    align-items: center;
    height: 18px;
    padding-left: 2px;
}

.pos-combo {
    width: 37px;
    border: 1px solid #b4b4b4;
}

.position label {
    width: 42px;
}

.position .loc {
    width: 10px;
    margin-left: 12px;
}

.position .ib {
    margin-left: 3px;
}

.spin {
    width: 8px;
    height: 11px;
    border: 1px solid #c4c4c4;
    background: #eee;
    display: grid;
    place-content: center;
    gap: 2px;
}

.spin::before,
.spin::after {
    content: '';
    border: 2px solid transparent;
    border-top: 0;
    border-bottom: 2px solid #444;
}

.spin::after {
    border-top: 2px solid #444;
    border-bottom: 0;
}

.unit {
    margin-left: 3px;
}

.scroller {
    display: flex;
}

.grid {
    width: 203px;
    height: 130px;
    table-layout: fixed;
    border-collapse: collapse;
    line-height: 7px;
    background: #f0f0f0;
    text-align: right;
}

.stresses {
    height: 129px;
}

.grid th,
.grid td {
    border: 1px solid #b4b4b4;
    white-space: nowrap;
}

.grid td {
    padding: 0 1px;
}

.grid th {
    background: #e4e4e4;
    text-align: center;
    border-color: #a0a0a0;
}

.grid .names th {
    background: #f0f0f0;
    height: 9px;
    border-color: #f0f0f0 #b4b4b4 #a0a0a0;
}

.grid .top th {
    border-bottom-color: #f0f0f0;
}

.stresses td {
    background: #fff;
}

.stresses td:nth-child(2) {
    text-align: left;
}

.stresses .dim td {
    background: #ececec;
}

.points .focus {
    color: #888;
    outline: 1px solid #555;
    outline-offset: -1px;
}

.stresses .focus {
    outline: 1px solid #333;
}

.c21 { width: 21px; }
.c25 { width: 25px; }
.c26 { width: 26px; }
.c30 { width: 30px; }
.c36 { width: 36px; }
.c39 { width: 39px; }
.c56 { width: 56px; }
.c66 { width: 66px; }

.vscroll {
    width: 8px;
    display: flex;
    flex-direction: column;
    align-items: center;
    gap: 2px;
    padding: 2px 0;
    background: #f0f0f0;
}

.vscroll svg {
    width: 6px;
    height: 6px;
}

.vscroll i {
    width: 8px;
    height: 9px;
    background: #cdcdcd;
    margin-bottom: auto;
}

.vscroll .long {
    height: 102px;
}

.diagram {
    display: flex;
    flex-direction: column;
    border-top: 1px solid #888;
    border-left: 1px solid #888;
    border-right: 1px solid #c4c4f0;
    background: linear-gradient(45deg, #fff 25%, #faf5e1);
}

.drawing {
    width: 100%;
    height: auto;
}

.diagram .minmax {
    margin-top: -14px;
}

.note text {
    font-size: 6px;
    fill: #333;
}

.dims text {
    font-size: 6px;
    text-anchor: middle;
    fill: #111;
}

.marks text {
    font-size: 5px;
    text-anchor: middle;
}

.diagram-tools {
    flex: 1;
    display: flex;
    flex-direction: column;
    gap: 3px;
    padding: 3px 2px 2px 1px;
    background: #eff3fb;
    border-bottom: 1px solid #c4c4f0;
}

.toolrow {
    display: flex;
    align-items: center;
    gap: 2px;
}

.scale {
    width: 16px;
    height: 11px;
    padding-left: 1px;
    background: #fff;
    border: 1px solid #b4b4b4;
    margin-left: 10px;
}

.toolrow .spin {
    margin-left: -2px;
}

.dialog-foot {
    display: flex;
    align-items: center;
    justify-content: space-between;
    height: 22px;
    padding: 0 4px 0 5px;
}

.dialog-foot .btn {
    width: 40px;
}

.default {
    border: 1px solid #0078d7;
}

.callout {
    position: absolute;
    left: 250px;
    top: 408px;
    width: 20px;
    height: 70px;
    pointer-events: none;
}
```
